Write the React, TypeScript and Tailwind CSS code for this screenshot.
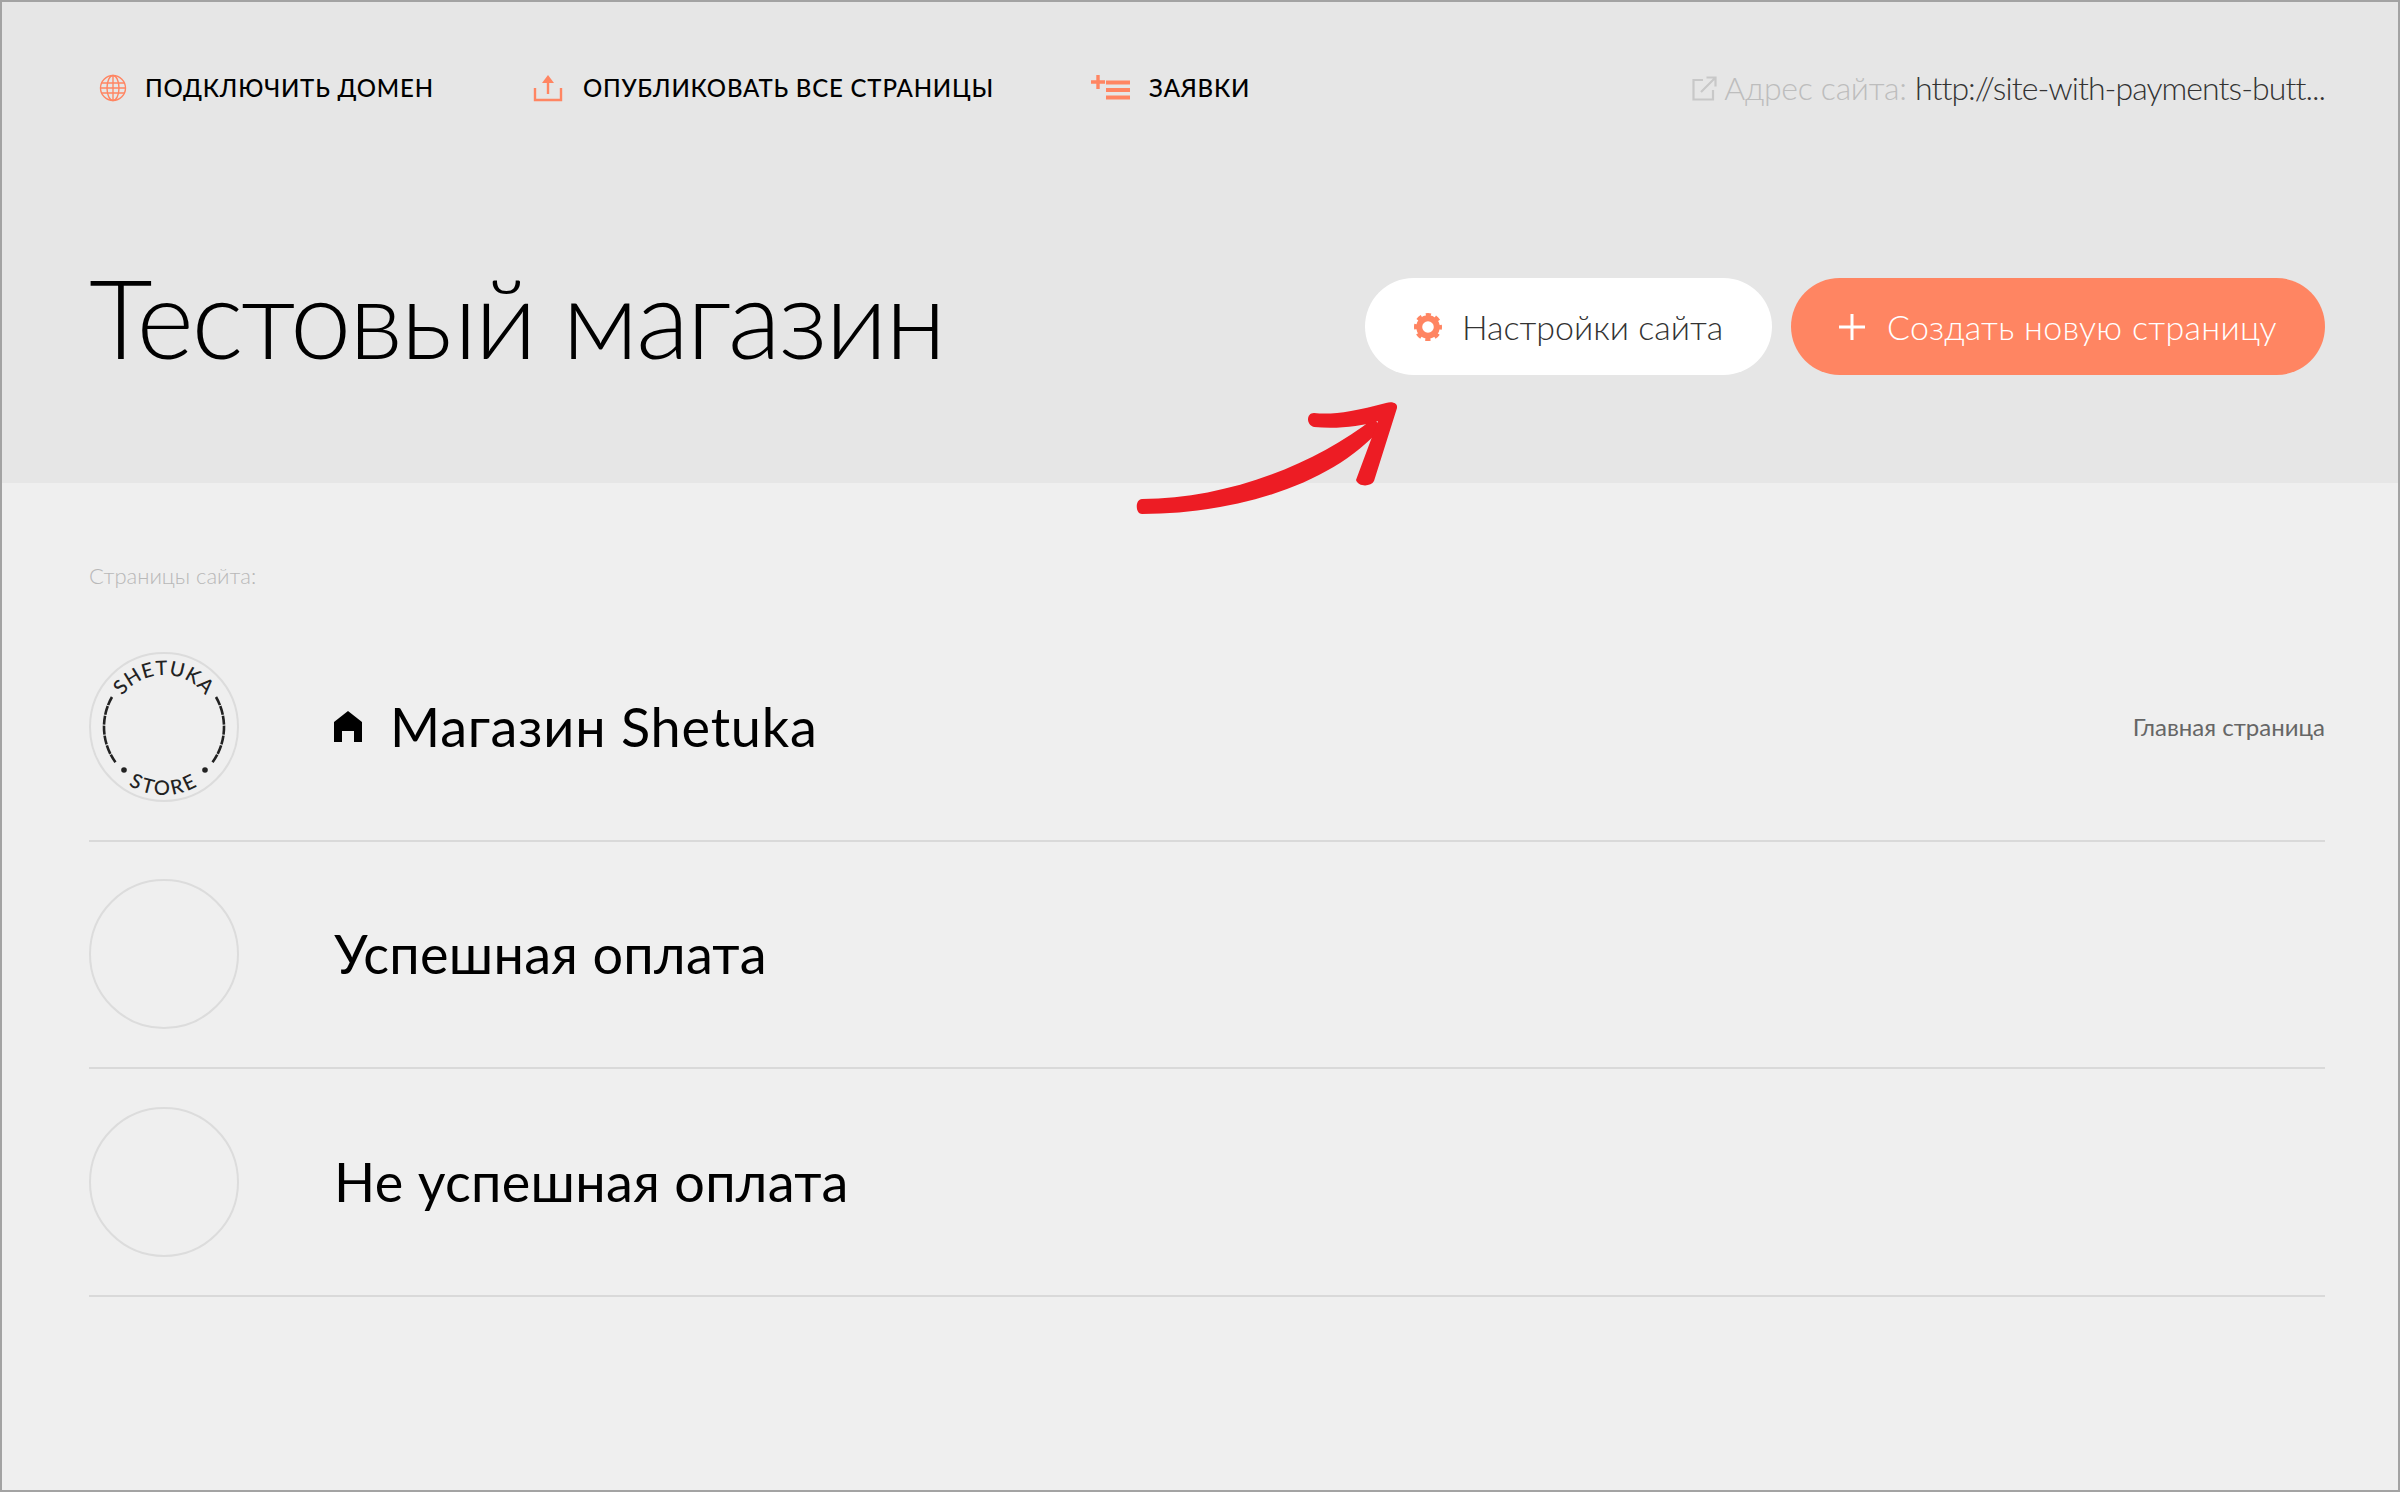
const pages = [
  { title: "Успешная оплата" },
  { title: "Не успешная оплата" },
];

function GlobeIcon() {
  return (
    <svg width="28" height="28" viewBox="0 0 28 28" fill="none" stroke="#ff8562" strokeWidth="1.4">
      <circle cx="14" cy="14" r="12.5" />
      <ellipse cx="14" cy="14" rx="6" ry="12.5" />
      <path d="M14 1.5v25M2.5 9h23M1.5 14h25M2.5 19h23" />
    </svg>
  );
}

function UploadIcon() {
  return (
    <svg width="30" height="27" viewBox="0 0 30 27" fill="none" stroke="#ff8562" strokeWidth="2.4">
      <path d="M2 13v12h26V13" />
      <path d="M15 19V3" />
      <path d="M15 0l6 8H9z" fill="#ff8562" stroke="none" />
    </svg>
  );
}

function ListIcon() {
  return (
    <svg width="40" height="27" viewBox="0 0 40 27" fill="none" stroke="#ff8562">
      <path d="M0 7h14M7 0v14" strokeWidth="3.4" />
      <path d="M15 7.500h24M15 15h24M15 22.500h24" strokeWidth="3.8" />
    </svg>
  );
}

function ExternalIcon() {
  return (
    <svg width="25" height="25" viewBox="0 0 25 25" fill="none" stroke="#c8c8c8" strokeWidth="2.2">
      <path d="M11 4H1.500v19.500H21V14" />
      <path d="M9 16L23.500 1.500M14.500 1.500h9v9" />
    </svg>
  );
}

function GearIcon() {
  return (
    <svg width="28" height="28" viewBox="0 0 28 28" fill="none" stroke="#ff8562">
      <circle cx="14" cy="14" r="8.800" strokeWidth="6" />
      <circle cx="14" cy="14" r="12.400" strokeWidth="3.200" strokeDasharray="5.200 4.540" strokeDashoffset="2.600" />
    </svg>
  );
}

function HomeIcon() {
  return (
    <svg width="28" height="31" viewBox="0 0 28 31" className="shrink-0">
      <path fillRule="evenodd" d="M14 0l14 11v20H20V20H8v11H0V11z" fill="#000" />
    </svg>
  );
}

function Logo() {
  return (
    <svg width="150" height="150" viewBox="0 0 150 150" className="shrink-0">
      <circle cx="75" cy="75" r="74" fill="none" stroke="#dcdcdc" strokeWidth="2" />
      <path d="M23 45A60 60 0 0 0 27 111" fill="none" stroke="#222" strokeWidth="2.600" strokeDasharray="9 1" />
      <path d="M127 45A60 60 0 0 1 123 111" fill="none" stroke="#222" strokeWidth="2.600" strokeDasharray="9 1" />
      <circle cx="35" cy="118" r="2.800" fill="#222" />
      <circle cx="116" cy="118" r="2.800" fill="#222" />
      <defs>
        <path id="logo-top" d="M23 75A52 52 0 0 1 127 75" />
        <path id="logo-bottom" d="M7 75A68 68 0 0 0 143 75" />
      </defs>
      <text fontSize="20" letterSpacing="0.8" fill="#222" className="font-['Lato','Noto_Sans',sans-serif] font-medium" textAnchor="middle">
        <textPath href="#logo-top" startOffset="50%">SHETUKA</textPath>
      </text>
      <text fontSize="20" letterSpacing="2.5" fill="#222" className="font-['Lato','Noto_Sans',sans-serif] font-medium" textAnchor="middle">
        <textPath href="#logo-bottom" startOffset="50%">STORE</textPath>
      </text>
    </svg>
  );
}

function Arrow() {
  return (
    <svg
      width="270"
      height="125"
      viewBox="1130 395 270 125"
      className="absolute left-[1128px] top-[393px]"
    >
      <path
        fill="#ed1c24"
        d="M1142 499C1225 499 1315 465 1374 418L1381 428C1335 482 1240 514 1142 514C1135 514 1135 499 1142 499Z"
      />
      <path
        fill="#ed1c24"
        d="M1314 413C1332 415 1352 412 1386 403C1392 401 1398 403 1397 408L1374 481C1371 487 1358 487 1356 480L1369 445L1378 421C1360 427 1335 429 1314 427C1306 425 1306 413 1314 413Z"
      />
    </svg>
  );
}

export default function App() {
  return (
    <div className="relative w-[2400px] h-[1492px] border-2 border-[#a3a3a3] bg-[#efefef] text-black font-['Lato','Noto_Sans',sans-serif] overflow-hidden">
      <header className="h-[481px] bg-[#e6e6e6] pl-[87px] pr-[73px] pt-[66px]">
        <nav className="flex items-center h-[40px]">
          <a className="flex items-center gap-[18px] ml-[10px] text-[24px] tracking-[0.8px] font-medium uppercase leading-none">
            <GlobeIcon />
            <span>Подключить домен</span>
          </a>
          <a className="flex items-center gap-[20px] ml-[99px] text-[24px] tracking-[0.8px] font-medium uppercase leading-none">
            <UploadIcon />
            <span>Опубликовать все страницы</span>
          </a>
          <a className="flex items-center gap-[18px] ml-[97px] text-[24px] tracking-[0.8px] font-medium uppercase leading-none">
            <ListIcon />
            <span>Заявки</span>
          </a>
          <div className="ml-auto flex items-center gap-[7px] text-[32px] font-light text-[#bdbdbd] leading-none">
            <ExternalIcon />
            <span className="tracking-[-0.3px]">
              Адрес сайта: <span className="text-[#333] tracking-[-0.95px]">http://site-with-payments-butt...</span>
            </span>
          </div>
        </nav>
        <div className="flex items-center mt-[170px] h-[97px]">
          <h1 className="text-[110px] tracking-[-2.4px] font-light leading-none mb-[22px]">Тестовый магазин</h1>
          <button className="ml-auto flex items-center justify-center gap-[20px] w-[407px] h-[97px] rounded-full bg-white text-[34px] font-light text-[#333]">
            <GearIcon />
            <span>Настройки сайта</span>
          </button>
          <button className="ml-[19px] flex items-center justify-center gap-[22px] w-[534px] h-[97px] rounded-full bg-[#ff8562] text-[34px] tracking-[0.3px] font-light text-white">
            <svg width="26" height="26" viewBox="0 0 26 26" stroke="#fff" strokeWidth="3">
              <path d="M13 0v26M0 13h26" />
            </svg>
            <span>Создать новую страницу</span>
          </button>
        </div>
      </header>

      <main className="pl-[87px] pr-[73px]">
        <p className="mt-[78px] mb-[23px] text-[22px] font-light leading-[30px] text-[#b8b8b8]">Страницы сайта:</p>
        <div className="flex items-center h-[227.5px] border-b-2 border-[#d9d9d9]">
          <Logo />
          <div className="flex items-center ml-[95px] gap-[28px]">
            <HomeIcon />
            <span className="text-[54px] tracking-[0.8px] leading-none">Магазин Shetuka</span>
          </div>
          <span className="ml-auto text-[24px] text-[#666]">Главная страница</span>
        </div>
        {pages.map((page) => (
          <div key={page.title} className="flex items-center h-[227.5px] border-b-2 border-[#d9d9d9]">
            <div className="w-[150px] h-[150px] rounded-full border-2 border-[#dcdcdc] shrink-0" />
            <span className="ml-[95px] text-[54px] tracking-[0.3px] leading-none">{page.title}</span>
          </div>
        ))}
      </main>

      <Arrow />
    </div>
  );
}
